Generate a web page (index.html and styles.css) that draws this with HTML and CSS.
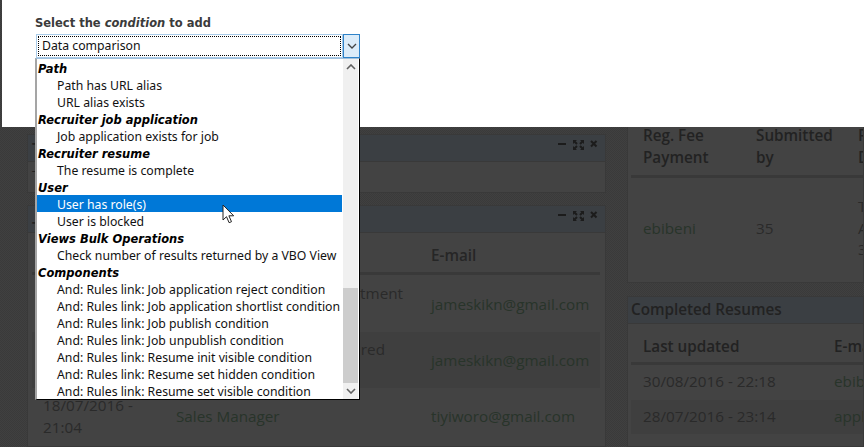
FILE: index.html
```html
<!DOCTYPE html>
<html lang="en">
<head>
<meta charset="utf-8">
<title>Select the condition to add</title>
<link rel="stylesheet" href="styles.css">
</head>
<body>
<div class="dash">
  <div class="col-left">
    <section class="card card-a">
      <header class="card-head">
        <h2>T</h2>
        <div class="tools">
          <svg width="40" height="12" viewBox="0 0 40 12"><path d="M0 5h8" class="t1"/><path d="M15 1h4l-1.300 1.300 2 2-1.400 1.400-2-2L15 5zM26 1h-4l1.300 1.300-2 2 1.400 1.400 2-2L26 5zM15 11V7l1.300 1.300 2-2 1.400 1.400-2 2L19 11zM26 11V7l-1.300 1.300-2-2-1.400 1.400 2 2L22 11z" class="t2"/><path d="M33 2l5.500 5.500M38.500 2L33 7.500" class="t1"/></svg>
        </div>
      </header>
      <div class="card-body-a">T</div>
    </section>
    <section class="card card-b">
      <header class="card-head">
        <h2>T</h2>
        <div class="tools">
          <svg width="40" height="12" viewBox="0 0 40 12"><path d="M0 5h8" class="t1"/><path d="M15 1h4l-1.300 1.300 2 2-1.400 1.400-2-2L15 5zM26 1h-4l1.300 1.300-2 2 1.400 1.400 2-2L26 5zM15 11V7l1.300 1.300 2-2 1.400 1.400-2 2L19 11zM26 11V7l-1.300 1.300-2-2-1.400 1.400 2 2L22 11z" class="t2"/><path d="M33 2l5.500 5.500M38.500 2L33 7.500" class="t1"/></svg>
        </div>
      </header>
      <div class="grid-row th-row"><b></b><b></b><b>E-mail</b></div>
      <div class="grid-row r1"><span></span><span class="cut cut-a">tment<br>&nbsp;</span><a>jameskikn@gmail.com</a></div>
      <div class="grid-row r2"><span></span><span class="cut cut-b">red<br>&nbsp;</span><a>jameskikn@gmail.com</a></div>
      <div class="grid-row r3"><span>18/07/2016 -<br>21:04</span><a>Sales Manager</a><a>tiyiworo@gmail.com</a></div>
    </section>
  </div>
  <div class="col-right">
    <section class="card card-c">
      <div class="c-head"><b>Reg. Fee<br>Payment</b><b>Submitted<br>by</b><b>R<br>D</b></div>
      <div class="c-row"><a>ebibeni</a><span>35</span><span>T<br>A<br>3</span></div>
    </section>
    <section class="card card-d">
      <header class="card-head"><h2>Completed Resumes</h2></header>
      <div class="d-row d-th"><b>Last updated</b><b>E-mail</b></div>
      <div class="d-row d1"><span>30/08/2016 - 22:18</span><a>ebibeni</a></div>
      <div class="d-row d2"><span>28/07/2016 - 23:14</span><a>applicant</a></div>
      <div class="d-row d3"><span>24/07/2016 - 21:58</span><a>a</a></div>
    </section>
  </div>
</div>

<div class="modal">
  <label class="prompt">Select the <em>condition</em> to add</label>
  <div class="select">
    <div class="select-value"><span>Data comparison</span></div>
    <div class="select-btn"><svg width="10" height="6" viewBox="0 0 10 6"><path d="M1 1l4 4 4-4" fill="none" stroke="#444" stroke-width="1.3"/></svg></div>
  </div>
</div>

<div class="dropdown">
  <ul class="options">
    <li class="grp">Path</li>
    <li>Path has URL alias</li>
    <li>URL alias exists</li>
    <li class="grp">Recruiter job application</li>
    <li>Job application exists for job</li>
    <li class="grp">Recruiter resume</li>
    <li>The resume is complete</li>
    <li class="grp">User</li>
    <li class="hot">User has role(s)</li>
    <li>User is blocked</li>
    <li class="grp">Views Bulk Operations</li>
    <li>Check number of results returned by a VBO View</li>
    <li class="grp">Components</li>
    <li>And: Rules link: Job application reject condition</li>
    <li>And: Rules link: Job application shortlist condition</li>
    <li>And: Rules link: Job publish condition</li>
    <li>And: Rules link: Job unpublish condition</li>
    <li>And: Rules link: Resume init visible condition</li>
    <li>And: Rules link: Resume set hidden condition</li>
    <li>And: Rules link: Resume set visible condition</li>
  </ul>
  <div class="scrollbar">
    <div class="arrow"><svg width="10" height="6" viewBox="0 0 10 6"><path d="M1 5l4-4 4 4" fill="none" stroke="#606060" stroke-width="1.6"/></svg></div>
    <div class="track"><div class="thumb"></div></div>
    <div class="arrow"><svg width="10" height="6" viewBox="0 0 10 6"><path d="M1 1l4 4 4-4" fill="none" stroke="#606060" stroke-width="1.6"/></svg></div>
  </div>
</div>

<svg class="cursor" width="14" height="20" viewBox="0 0 14 20"><path d="M1 1v15l3.500-3.300 2.600 6 2.400-1-2.600-5.900h4.800z" fill="#fff" stroke="#222" stroke-width="1"/></svg>
</body>
</html>
```
FILE: styles.css
```css
* { box-sizing: border-box; }
html, body { margin: 0; padding: 0; }
body {
  width: 864px;
  height: 447px;
  overflow: hidden;
  position: relative;
  background-color: #3e3e3e;
  background-image: repeating-conic-gradient(#404040 0 25%, #3a3a3a 0 50%);
  background-size: 2px 2px;
  font-family: "Open Sans", "Liberation Sans", sans-serif;
  font-size: 15.25px;
  color: #262626;
}
.dash {
  display: grid;
  grid-template-columns: 579px 237px;
  column-gap: 21px;
  padding-left: 27px;
  height: 447px;
  overflow: hidden;
}
.col-left { padding-top: 134px; display: flex; flex-direction: column; gap: 12px; min-height: 0; }
.col-right { padding-top: 100px; display: flex; flex-direction: column; gap: 13px; min-height: 0; }
.card { background: #434343; border: 1px solid #393939; overflow: hidden; }
.card-head {
  height: 27px;
  background: #3b3f43;
  border-bottom: 1px solid #393939;
  display: flex;
  align-items: center;
  justify-content: space-between;
  padding: 0 7px 7px 4px;
}
.card-head h2 { margin: 7px 0 0; align-self: flex-start; font-size: 15.25px; line-height: 14px; font-weight: 600; color: #222; }
.card-b .card-head h2 { margin-top: 15px; }
.card-d .card-head { padding: 0 0 4px 3px; }
.card-d .card-head h2 { margin: 3px 0 0; line-height: 18px; white-space: nowrap; }
.tools { display: flex; }
.t1 { stroke: #1c1c1c; stroke-width: 2; fill: none; }
.t2 { fill: #1c1c1c; }
.card-a { height: 59px; flex: none; }
.card-body-a { padding: 4px 4px; color: #222; line-height: 19px; }
.card-b { flex: 1; }
.grid-row {
  display: grid;
  grid-template-columns: 133px 255px 1fr;
  margin: 0 5px 0 4px;
  padding-left: 11px;
  align-items: center;
  line-height: 22px;
}
.th-row { height: 42px; padding-top: 5px; border-bottom: 3px solid #393939; }
.r1 { height: 57px; }
.r2 { height: 56px; background: #3f3f3f; }
.r3 { height: 58px; padding-bottom: 3px; }
.grid-row a, .d-row a, .c-row a { color: #28342a; }
.grid-row span, .d-row span, .c-row span { color: #2a2a2a; }
.cut { text-align: right; }
.cut-a { padding-right: 28px; }
.cut-b { padding-right: 46px; }
.card-c { height: 183px; flex: none; }
.c-head, .c-row { display: grid; grid-template-columns: 113px 102px 1fr; margin-left: 3px; padding-left: 12px; white-space: nowrap; }
.c-head { height: 77px; padding-top: 23px; line-height: 22px; border-bottom: 3px solid #393939; color: #222; }
.c-head b, .th-row b, .d-th b { font-weight: 600; }
.c-row { align-items: center; height: 101px; line-height: 21.500px; }
.card-d { flex: 1; }
.d-row { display: grid; grid-template-columns: 191px 1fr; margin-left: 3px; padding-left: 12px; align-items: center; white-space: nowrap; }
.d-th { height: 41px; padding-top: 6px; border-bottom: 3px solid #393939; color: #222; }
.d1 { height: 35px; padding-bottom: 3px; }
.d2 { height: 34px; padding-bottom: 2px; background: #3f3f3f; }
.d3 { height: 34px; }

.modal {
  position: absolute;
  left: 2px;
  top: 0;
  right: 0;
  height: 127px;
  background: #fff;
  padding: 15px 0 0 33px;
}
.prompt {
  display: block;
  font-family: "DejaVu Sans", sans-serif;
  font-size: 11.5px;
  font-weight: 700;
  line-height: 16px;
  color: #3b3b3b;
}
.select {
  display: flex;
  width: 324px;
  height: 24px;
  margin: 3px 0 0 1px;
  font-family: "Noto Sans", sans-serif;
  font-size: 12.25px;
}
.select-value {
  flex: 1;
  border: 1px solid #a9cbe8;
  padding: 1px;
  background: #fff;
}
.select-value span {
  display: block;
  height: 100%;
  border: 1px dotted #000;
  padding-left: 3px;
  line-height: 17px;
  color: #111;
}
.select-btn {
  width: 17px;
  background: #dcecf9;
  border: 1px solid #2f83c9;
  display: flex;
  align-items: center;
  justify-content: center;
}

.dropdown {
  position: absolute;
  left: 35px;
  top: 58px;
  width: 325px;
  height: 342px;
  display: flex;
  background: #fff;
  border-left: 2px solid #a5a5a5;
  border-right: 1px solid #000;
  border-bottom: 1px solid #000;
  border-top: 1px solid #a0c0dc;
  font-family: "Noto Sans", sans-serif;
  font-size: 12.25px;
  color: #111;
}
.options { flex: 1; list-style: none; margin: 0 1px 0 0; padding: 0; overflow: hidden; }
.options li { height: 17px; line-height: 17px; padding-left: 20px; padding-top: 1px; white-space: nowrap; }
.options .grp { padding-left: 1px; padding-top: 2px; font-weight: 700; font-style: italic; font-family: "DejaVu Sans", sans-serif; font-size: 11.500px; color: #000; }
.options .hot { background: #0078d7; color: #fff; }
.scrollbar { width: 15px; margin-right: 1px; background: #f0f0f0; display: flex; flex-direction: column; }
.arrow { height: 17px; display: flex; align-items: center; justify-content: center; }
.track { flex: 1; padding-top: 212px; }
.thumb { height: 95px; background: #cdcdcd; }
.cursor { position: absolute; left: 222px; top: 204px; }
```
